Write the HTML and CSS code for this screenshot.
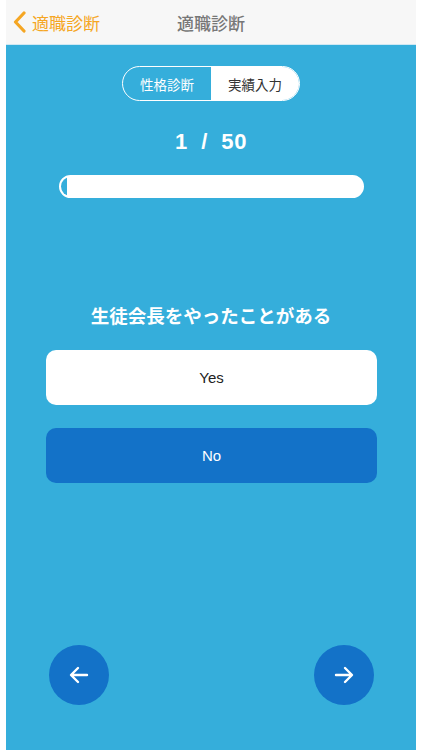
FILE: index.html
```html
<!DOCTYPE html>
<html lang="ja">
<head>
<meta charset="utf-8">
<link rel="stylesheet" href="styles.css">
</head>
<body>
<div class="app">
  <header class="nav">
    <div class="back">
      <svg class="chev" width="16" height="22" viewBox="0 0 16 22"><path d="M12 2 L3.5 11 L12 20" fill="none" stroke="#f5a623" stroke-width="3.2" stroke-linecap="round" stroke-linejoin="round"/></svg>
      <span>適職診断</span>
    </div>
    <div class="title">適職診断</div>
  </header>
  <main class="content">
    <div class="segment">
      <div class="seg seg-left">性格診断</div>
      <div class="seg seg-right">実績入力</div>
    </div>
    <div class="counter">1&nbsp;&nbsp;/&nbsp;&nbsp;50</div>
    <div class="progress"><div class="fill" style="width:2%"></div></div>
    <div class="question">生徒会長をやったことがある</div>
    <button class="answer yes">Yes</button>
    <button class="answer no">No</button>
    <div class="arrows">
      <button class="circle">
        <svg width="24" height="24" viewBox="0 0 24 24"><path d="M20 12 H4.5 M11 5 L4 12 L11 19" fill="none" stroke="#fff" stroke-width="2.4" stroke-linecap="round" stroke-linejoin="round"/></svg>
      </button>
      <button class="circle">
        <svg width="24" height="24" viewBox="0 0 24 24"><path d="M4 12 H19.5 M13 5 L20 12 L13 19" fill="none" stroke="#fff" stroke-width="2.4" stroke-linecap="round" stroke-linejoin="round"/></svg>
      </button>
    </div>
  </main>
</div>
</body>
</html>
```
FILE: styles.css
```css
* { box-sizing: border-box; }
html, body { margin: 0; padding: 0; background: #fff; }
body {
  font-family: "Noto Sans CJK JP", "Noto Sans", sans-serif;
}
.app {
  width: 410px;
  height: 750px;
  margin-left: 6px;
  display: flex;
  flex-direction: column;
  overflow: hidden;
}
.nav {
  height: 45px;
  background: #f7f7f7;
  position: relative;
  display: flex;
  align-items: center;
  justify-content: center;
  border-bottom: 1px solid #cfe8f3;
}
.back {
  position: absolute;
  left: 6px;
  top: 0;
  height: 44px;
  display: flex;
  align-items: center;
  gap: 4px;
  color: #f5a623;
  font-size: 17px;
}
.chev { display: block; }
.title {
  color: #777;
  font-size: 17px;
  font-weight: 500;
}
.content {
  flex: 1;
  background: #35aedb;
  display: flex;
  flex-direction: column;
  align-items: center;
}
.segment {
  margin-top: 21px;
  width: 178px;
  height: 35px;
  border: 1.5px solid #fff;
  border-radius: 18px;
  display: flex;
  overflow: hidden;
}
.seg {
  flex: 1;
  display: flex;
  align-items: center;
  justify-content: center;
  font-size: 13.5px;
}
.seg-left { color: #fff; }
.seg-right { background: #fff; color: #333; }
.counter {
  margin-top: 28px;
  height: 26px;
  line-height: 26px;
  color: #fff;
  font-family: "Liberation Sans", Arial, sans-serif;
  font-weight: 700;
  font-size: 22px;
  letter-spacing: 0.6px;
}
.progress {
  margin-top: 20px;
  width: 305px;
  height: 23px;
  border: 2px solid #fff;
  border-radius: 12px;
  background: #fff;
  overflow: hidden;
  margin-left: 1px;
}
.fill {
  height: 100%;
  background: #35aedb;
  border-radius: 10px 0 0 10px;
}
.question {
  margin-top: 103px;
  color: #fff;
  font-size: 18.5px;
  font-weight: 700;
  height: 28px;
  line-height: 28px;
}
.answer {
  border: none;
  width: 331px;
  height: 55px;
  border-radius: 10px;
  font-family: "Liberation Sans", Arial, sans-serif;
  font-size: 15px;
  margin-left: 1px;
  padding: 0;
}
.yes {
  margin-top: 21px;
  background: #fff;
  color: #222;
}
.no {
  margin-top: 23px;
  background: #1372c8;
  color: #fff;
}
.arrows {
  margin-top: 162px;
  width: 410px;
  padding: 0 42px 0 43px;
  display: flex;
  justify-content: space-between;
}
.circle {
  width: 60px;
  height: 60px;
  border-radius: 50%;
  border: none;
  background: #1372c8;
  display: flex;
  align-items: center;
  justify-content: center;
  padding: 0;
}
.circle svg { display: block; }
```
